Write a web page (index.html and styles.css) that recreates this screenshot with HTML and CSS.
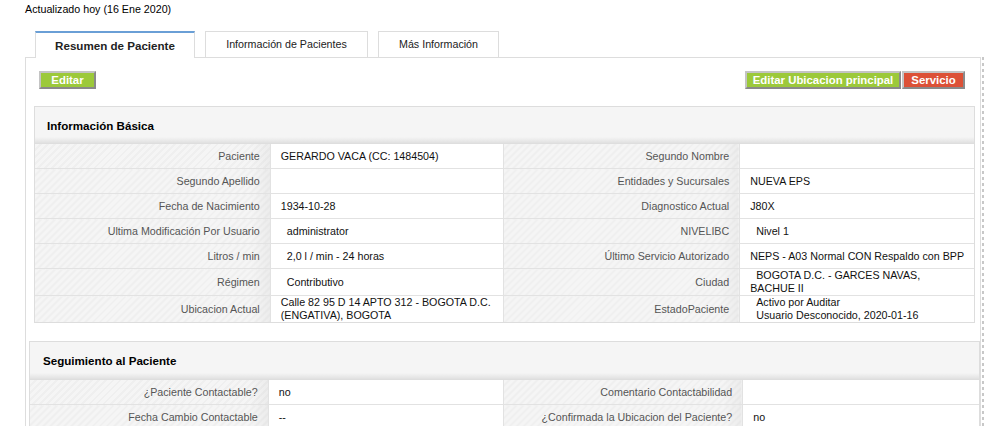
FILE: index.html
```html
<!DOCTYPE HTML>
<html>

<head>
  <meta charset="utf-8">
  <link rel="stylesheet" href="styles.css">
</head>

<body>
<div class="updated">Actualizado hoy (16 Ene 2020)</div>

<div class="tabs">
  <div class="tab active">Resumen de Paciente</div>
  <div class="tab tab-info">Información de Pacientes</div>
  <div class="tab tab-more">Más Información</div>
</div>

<div class="panel-wrap">
  <div class="panel">
    <div class="actions">
      <button class="btn btn-green">Editar</button>
      <div class="actions-right">
        <button class="btn btn-green">Editar Ubicacion principal</button>
        <button class="btn btn-red">Servicio</button>
      </div>
    </div>

    <div class="section section-basic">
      <div class="section-title">Información Básica</div>
      <table class="grid">
        <colgroup>
          <col style="width: 235px">
          <col style="width: 233px">
          <col style="width: 236px">
          <col style="width: 234px">
        </colgroup>
        <tr>
          <td class="label">Paciente</td>
          <td class="value">GERARDO VACA (CC: 1484504)</td>
          <td class="label">Segundo Nombre</td>
          <td class="value"></td>
        </tr>
        <tr>
          <td class="label">Segundo Apellido</td>
          <td class="value"></td>
          <td class="label">Entidades y Sucursales</td>
          <td class="value">NUEVA EPS</td>
        </tr>
        <tr>
          <td class="label">Fecha de Nacimiento</td>
          <td class="value">1934-10-28</td>
          <td class="label">Diagnostico Actual</td>
          <td class="value">J80X</td>
        </tr>
        <tr>
          <td class="label">Ultima Modificación Por Usuario</td>
          <td class="value indent">administrator</td>
          <td class="label">NIVELIBC</td>
          <td class="value indent">Nivel 1</td>
        </tr>
        <tr>
          <td class="label">Litros / min</td>
          <td class="value indent">2,0 l / min - 24 horas</td>
          <td class="label">Último Servicio Autorizado</td>
          <td class="value">NEPS - A03 Normal CON Respaldo con BPP</td>
        </tr>
        <tr class="tall">
          <td class="label">Régimen</td>
          <td class="value indent">Contributivo</td>
          <td class="label">Ciudad</td>
          <td class="value"><span class="indent-in">BOGOTA D.C. - GARCES NAVAS,</span><br>BACHUE II</td>
        </tr>
        <tr class="tall">
          <td class="label">Ubicacion Actual</td>
          <td class="value">Calle 82 95 D 14 APTO 312 - BOGOTA D.C.<br>(ENGATIVA), BOGOTA</td>
          <td class="label">EstadoPaciente</td>
          <td class="value indent">Activo por Auditar<br>Usuario Desconocido, 2020-01-16</td>
        </tr>
      </table>
    </div>

    <div class="section section-follow">
      <div class="section-title">Seguimiento al Paciente</div>
      <table class="grid">
        <colgroup>
          <col style="width: 238px">
          <col style="width: 235px">
          <col style="width: 239px">
          <col style="width: 236px">
        </colgroup>
        <tr>
          <td class="label">¿Paciente Contactable?</td>
          <td class="value">no</td>
          <td class="label">Comentario Contactabilidad</td>
          <td class="value"></td>
        </tr>
        <tr>
          <td class="label">Fecha Cambio Contactable</td>
          <td class="value">--</td>
          <td class="label">¿Confirmada la Ubicacion del Paciente?</td>
          <td class="value">no</td>
        </tr>
      </table>
    </div>
  </div>
</div>

</body>

</html>
```

FILE: styles.css
```css
body {
  margin: 0;
  font-family: "Liberation Sans", Arial, sans-serif;
  font-size: 10.7px;
  color: #000;
  background: #fff;
}

.updated {
  padding: 3px 0 0 25px;
  line-height: 13px;
  height: 28px;
}

/* pestañas */

.tabs {
  display: flex;
  gap: 10px;
  margin-left: 35px;
  height: 26px;
}

.tab {
  box-sizing: border-box;
  height: 26px;
  border: 1px solid #ddd;
  border-bottom: none;
  background: #fff;
  text-align: center;
  line-height: 24px;
  color: #222;
}

.tab.active {
  width: 160px;
  border-top: 2px solid #6a9fd6;
  height: 27px;
  margin-bottom: -1px;
  position: relative;
  z-index: 1;
  font-weight: bold;
  font-size: 11.6px;
  line-height: 26px;
}

.tab-info {
  width: 163px;
}

.tab-more {
  width: 121px;
}

/* panel principal */

.panel-wrap {
  margin-left: 25px;
  width: 959px;
  background: linear-gradient(#c8c8c8 50%, transparent 50%) right top / 2px 6px repeat-y;
}

.panel {
  box-sizing: border-box;
  width: 956px;
  border: 1px solid #ddd;
  border-bottom: none;
  padding: 13px 0 20px 0;
}

.actions {
  display: flex;
  justify-content: space-between;
  padding: 0 15px 0 13px;
}

.actions-right {
  display: flex;
  gap: 1px;
}

.btn {
  box-sizing: border-box;
  height: 18px;
  padding: 0;
  margin: 0;
  border: 2px solid;
  border-color: #c4c4c4 #8a8a8a #8a8a8a #c4c4c4;
  font-family: "Liberation Sans", Arial, sans-serif;
  font-size: 11.4px;
  font-weight: bold;
  line-height: 14px;
  color: #fff;
  text-align: center;
  white-space: nowrap;
}

.btn-green {
  background: #9cc93a;
}

.actions > .btn-green {
  width: 57px;
}

.actions-right .btn-green {
  width: 156px;
}

.btn-red {
  background: #dc5137;
  width: 63px;
}

/* secciones */

.section {
  border: 1px solid #ddd;
  border-top: none;
}

.section-basic {
  margin: 17px 0 0 8px;
  width: 939px;
}

.section-follow {
  margin: 18px 0 0 3px;
  width: 949px;
}

.section-title {
  border-top: 1px solid #ddd;
  height: 37px;
  padding-left: 12px;
  line-height: 37px;
  font-size: 11.6px;
  font-weight: bold;
  background: linear-gradient(to bottom, #f5f5f5 30px, #e4e4e4 35px, #dcdcdc 37px);
}

.section-follow .section-title {
  height: 38px;
  line-height: 38px;
  padding-left: 13px;
  background: linear-gradient(to bottom, #f5f5f5 31px, #e4e4e4 36px, #dcdcdc 38px);
}

.grid {
  border-collapse: collapse;
  table-layout: fixed;
  width: 100%;
}

.grid td {
  height: 24px;
  padding: 0 10px;
  border-top: 1px solid #e2e2e2;
  border-left: 1px solid #e2e2e2;
  line-height: 13px;
  vertical-align: middle;
  white-space: nowrap;
  overflow: hidden;
}

.grid tr:first-child td {
  border-top: none;
}

.grid td:first-child {
  border-left: none;
}

.grid tr.tall td {
  height: 26px;
}

.grid .label {
  text-align: right;
  color: #555;
  background:
    linear-gradient(to right, transparent 92%, rgba(0, 0, 0, 0.035)),
    repeating-linear-gradient(135deg, #f5f5f5 0 3px, #efefef 3px 5px);
}

.grid .value {
  color: #111;
  background: #fff;
}

.grid .indent {
  padding-left: 16px;
}

.indent-in {
  padding-left: 6px;
}
```
